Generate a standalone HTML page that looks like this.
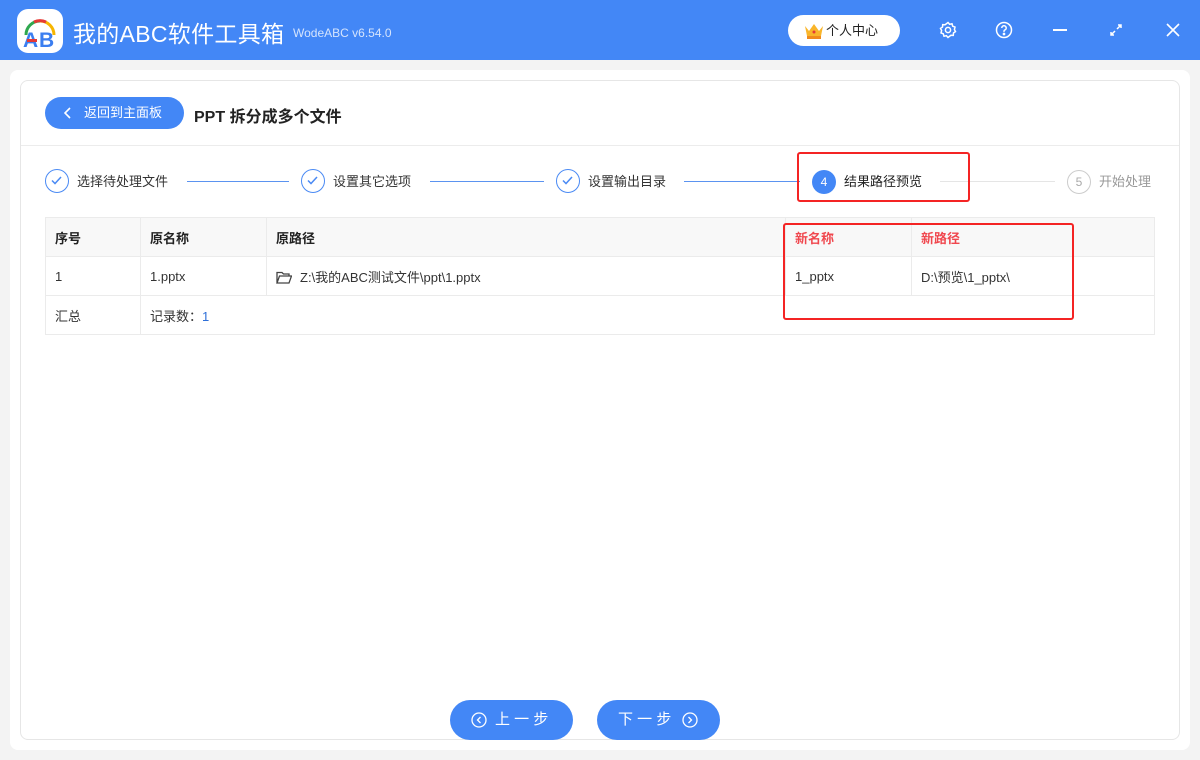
<!DOCTYPE html>
<html><head><meta charset="utf-8"><style>
*{margin:0;padding:0;box-sizing:border-box}
body{width:1200px;height:760px;overflow:hidden;background:#f3f3f3;font-family:"Liberation Sans","Noto Sans CJK SC",sans-serif;position:relative;font-size:13px;color:#333}
.top{position:absolute;left:0;top:0;width:1200px;height:60px;background:#4387f6}
.logo{position:absolute;left:17px;top:9px;width:46px;height:44px;background:#fff;border-radius:11px}
.title{position:absolute;left:73px;top:15px;color:#fff;font-size:23px;letter-spacing:0.3px}
.ver{position:absolute;left:293px;top:26px;color:#d5e4fd;font-size:12px}
.user{position:absolute;left:788px;top:15px;width:112px;height:31px;background:#fff;border-radius:16px;font-size:13px;color:#222;line-height:31px;padding-left:38px}
.outer{position:absolute;left:10px;top:70px;width:1180px;height:680px;background:#fff;border-radius:8px}
.inner{position:absolute;left:20px;top:80px;width:1160px;height:660px;border:1px solid #e6e6e6;border-radius:8px;background:#fff}
.hline{position:absolute;left:21px;top:145px;width:1158px;height:1px;background:#ececec}
.back{position:absolute;left:45px;top:97px;width:139px;height:32px;background:#4387f6;border-radius:16px;color:#fff;font-size:13px;line-height:32px;padding-left:39px}
.h1{position:absolute;left:194px;top:103px;font-size:16px;font-weight:bold;color:#222}
.step{position:absolute;top:170px;height:24px;line-height:24px;font-size:13px;color:#333}
.ck{position:absolute;width:24px;height:24px;border:1.5px solid #4a8af4;border-radius:50%}
.sl{position:absolute;top:181px;height:1px;background:#5b93f0}
table{position:absolute;left:45px;top:217px;width:1110px;border-collapse:collapse;font-size:13px}
td{border:1px solid #ebebeb;height:39px;padding-left:9px;color:#333}
tr.h td{background:#f8f8f8;font-weight:bold;color:#222}
.red{position:absolute;border:2.5px solid #f42424;border-radius:3px}
.btn{position:absolute;top:700px;width:123px;height:40px;background:#4387f6;border-radius:20px;color:#fff;font-size:15px;line-height:40px}
</style></head><body>
<div class="top">
<div class="logo"><svg width="46" height="44" viewBox="0 0 46 44"><path d="M9 26 A14 14 0 0 1 23 12" stroke="#2fa84f" stroke-width="3" fill="none"/><path d="M23 12 A14 14 0 0 1 37 26" stroke="#f6b500" stroke-width="3" fill="none"/><path d="M17 13 A14 14 0 0 1 29 13" stroke="#e53935" stroke-width="3" fill="none"/><text x="6" y="38" font-size="21" font-weight="bold" fill="#3b7ef0" font-family="Liberation Sans">A</text><text x="22" y="38" font-size="21" font-weight="bold" fill="#3b7ef0" font-family="Liberation Sans">B</text><rect x="10" y="30" width="10" height="3" fill="#e53935"/></svg></div>
<div class="title">我的ABC软件工具箱</div>
<div class="ver">WodeABC v6.54.0</div>
<div class="user"><svg style="position:absolute;left:16px;top:7px" width="20" height="17" viewBox="0 0 20 17"><path d="M1 4 L5 9 L10 2 L15 9 L19 4 L17 14 H3Z" fill="#f9b52a"/><rect x="3" y="14" width="14" height="3" fill="#f08a1c"/><circle cx="10" cy="10" r="1.5" fill="#e53935"/></svg>个人中心</div>
<svg style="position:absolute;left:939px;top:21px" width="18" height="18" viewBox="0 0 18 18" fill="none" stroke="#fff" stroke-width="1.5"><circle cx="9" cy="9" r="2.6"/><path d="M9 1.5l1.6 1.8 2.4-.5.7 2.4 2.3.9-.6 2.4 1.1 2.1-2 1.3-.2 2.5-2.4-.1L9 16.5l-1.6-1.8-2.4.5-.7-2.4-2.3-.9.6-2.4L1.5 7.4l2-1.3.2-2.5 2.4.1z"/></svg>
<svg style="position:absolute;left:995px;top:21px" width="18" height="18" viewBox="0 0 18 18" fill="none" stroke="#fff" stroke-width="1.5"><circle cx="9" cy="9" r="7.5"/><path d="M6.8 7a2.2 2.2 0 1 1 2.8 2.1c-.5.2-.6.6-.6 1.2v.6"/><circle cx="9" cy="13" r=".6" fill="#fff"/></svg>
<div style="position:absolute;left:1053px;top:29px;width:14px;height:2px;background:#fff"></div>
<svg style="position:absolute;left:1109px;top:23px" width="14" height="14" viewBox="0 0 14 14" stroke="#fff" stroke-width="1.5" fill="none"><path d="M2 12L6 8M8 6L12 2M2 9v3h3M9 2h3v3"/></svg>
<svg style="position:absolute;left:1165px;top:22px" width="16" height="16" viewBox="0 0 16 16" stroke="#fff" stroke-width="1.6"><path d="M2 2L14 14M14 2L2 14"/></svg>
</div>
<div class="outer"></div>
<div class="inner"></div>
<div class="hline"></div>
<div class="back"><svg style="position:absolute;left:19px;top:10px" width="8" height="12" viewBox="0 0 8 12" fill="none" stroke="#fff" stroke-width="1.6"><path d="M6 1L1 6l5 5"/></svg>返回到主面板</div>
<div class="h1">PPT 拆分成多个文件</div>

<div class="ck" style="left:45px;top:169px"><svg width="21" height="21" viewBox="0 0 21 21" fill="none" stroke="#4a8af4" stroke-width="1.5"><path d="M6 10.5l3 3 6-6.5"/></svg></div>
<div class="step" style="left:77px">选择待处理文件</div>
<div class="sl" style="left:187px;width:102px"></div>
<div class="ck" style="left:301px;top:169px"><svg width="21" height="21" viewBox="0 0 21 21" fill="none" stroke="#4a8af4" stroke-width="1.5"><path d="M6 10.5l3 3 6-6.5"/></svg></div>
<div class="step" style="left:333px">设置其它选项</div>
<div class="sl" style="left:430px;width:114px"></div>
<div class="ck" style="left:556px;top:169px"><svg width="21" height="21" viewBox="0 0 21 21" fill="none" stroke="#4a8af4" stroke-width="1.5"><path d="M6 10.5l3 3 6-6.5"/></svg></div>
<div class="step" style="left:588px">设置输出目录</div>
<div class="sl" style="left:684px;width:116px"></div>
<div style="position:absolute;left:812px;top:170px;width:24px;height:24px;border-radius:50%;background:#4387f6;color:#fff;font-size:12px;text-align:center;line-height:24px">4</div>
<div class="step" style="left:844px;color:#222">结果路径预览</div>
<div class="sl" style="left:940px;width:115px;background:#e5e5e5"></div>
<div style="position:absolute;left:1067px;top:170px;width:24px;height:24px;border-radius:50%;border:1px solid #ccc;color:#aaa;font-size:12px;text-align:center;line-height:22px">5</div>
<div class="step" style="left:1099px;color:#999">开始处理</div>

<table>
<tr class="h"><td style="width:95px">序号</td><td style="width:126px">原名称</td><td style="width:519px">原路径</td><td style="width:126px;color:#f0474e">新名称</td><td style="color:#f0474e">新路径</td></tr>
<tr><td>1</td><td>1.pptx</td><td><svg style="vertical-align:-2px;margin-right:8px" width="16" height="13" viewBox="0 0 16 13" fill="none" stroke="#444" stroke-width="1.3"><path d="M1 12V1.5h5l1.5 1.5H13V5M1 12h12l2.5-7H3.5z"/></svg>Z:\我的ABC测试文件\ppt\1.pptx</td><td>1_pptx</td><td>D:\预览\1_pptx\</td></tr>
<tr><td>汇总</td><td colspan="4">记录数：<span style="color:#2e6fd8">1</span></td></tr>
</table>
<div class="red" style="left:797px;top:152px;width:173px;height:50px"></div>
<div class="red" style="left:783px;top:223px;width:291px;height:97px"></div>

<div class="btn" style="left:450px;padding-left:45px"><svg style="position:absolute;left:21px;top:12px" width="16" height="16" viewBox="0 0 16 16" fill="none" stroke="#fff" stroke-width="1.3"><circle cx="8" cy="8" r="7"/><path d="M9.5 5L6.5 8l3 3"/></svg>上 一 步</div>
<div class="btn" style="left:597px;padding-left:21px">下 一 步<svg style="position:absolute;left:85px;top:12px" width="16" height="16" viewBox="0 0 16 16" fill="none" stroke="#fff" stroke-width="1.3"><circle cx="8" cy="8" r="7"/><path d="M6.5 5l3 3-3 3"/></svg></div>
</body></html>
